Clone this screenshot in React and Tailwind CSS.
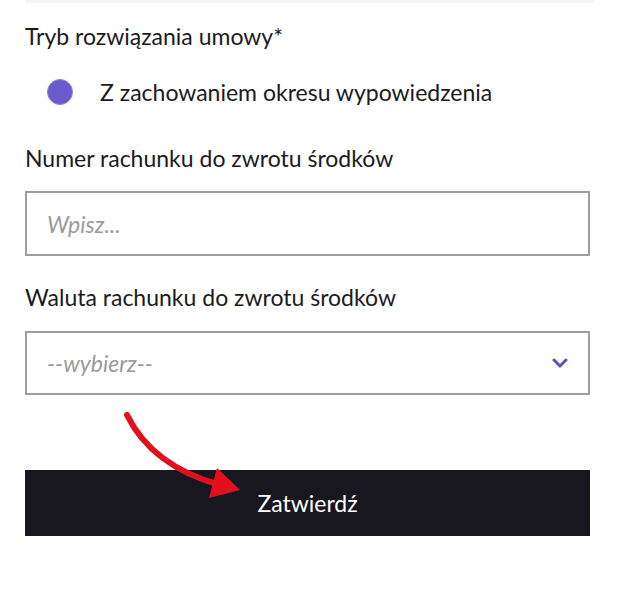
export default function App() {
  return (
    <div
      className="relative w-[620px] h-[601px] bg-white text-[#1b1b1f]"
      style={{ fontFamily: "Lato, 'Noto Sans', sans-serif" }}
    >
      <div className="mx-[25px] h-[3px] rounded-b bg-[#f3f3f8]" />

      <div className="pl-[25px] pr-[30px]">
        <p className="mt-[19px] text-[23px] leading-[28px]">Tryb rozwiązania umowy*</p>

        <label className="mt-[29px] flex items-center h-[26px]">
          <span className="ml-[22px] w-[26px] h-[26px] rounded-full bg-[#6a5acd] border border-[#8c84bf]" />
          <span className="ml-[27px] text-[23px] leading-[28px]">
            Z zachowaniem okresu wypowiedzenia
          </span>
        </label>

        <p className="mt-[39px] text-[23px] leading-[28px]">Numer rachunku do zwrotu środków</p>

        <input
          className="mt-[19px] block w-full h-[65px] border-2 border-[#9d9ca3] px-[20px] text-[23px] italic outline-none placeholder:text-[#9b9b9b]"
          type="text"
          placeholder="Wpisz..."
        />

        <p className="mt-[27px] text-[23px] leading-[28px]">Waluta rachunku do zwrotu środków</p>

        <div className="mt-[20px] flex items-center justify-between h-[64px] border-2 border-[#9d9ca3] pl-[20px] pr-[20px]">
          <span className="text-[23px] italic text-[#9b9b9b]">--wybierz--</span>
          <svg width="16" height="10" viewBox="0 0 16 10">
            <path d="M2 2 L8 8 L14 2" fill="none" stroke="#5e50b8" strokeWidth="3" strokeLinecap="round" strokeLinejoin="round" />
          </svg>
        </div>

        <button className="mt-[75px] w-full h-[66px] bg-[#18171f] text-white text-[23px]">
          Zatwierdź
        </button>
      </div>

      <svg className="absolute left-0 top-0 pointer-events-none" width="620" height="601">
        <path d="M127 415 Q 152 466 220 485" fill="none" stroke="#e2101f" strokeWidth="6" strokeLinecap="round" />
        <polygon points="240,490 217,468 209,498" fill="#e2101f" />
      </svg>
    </div>
  );
}
